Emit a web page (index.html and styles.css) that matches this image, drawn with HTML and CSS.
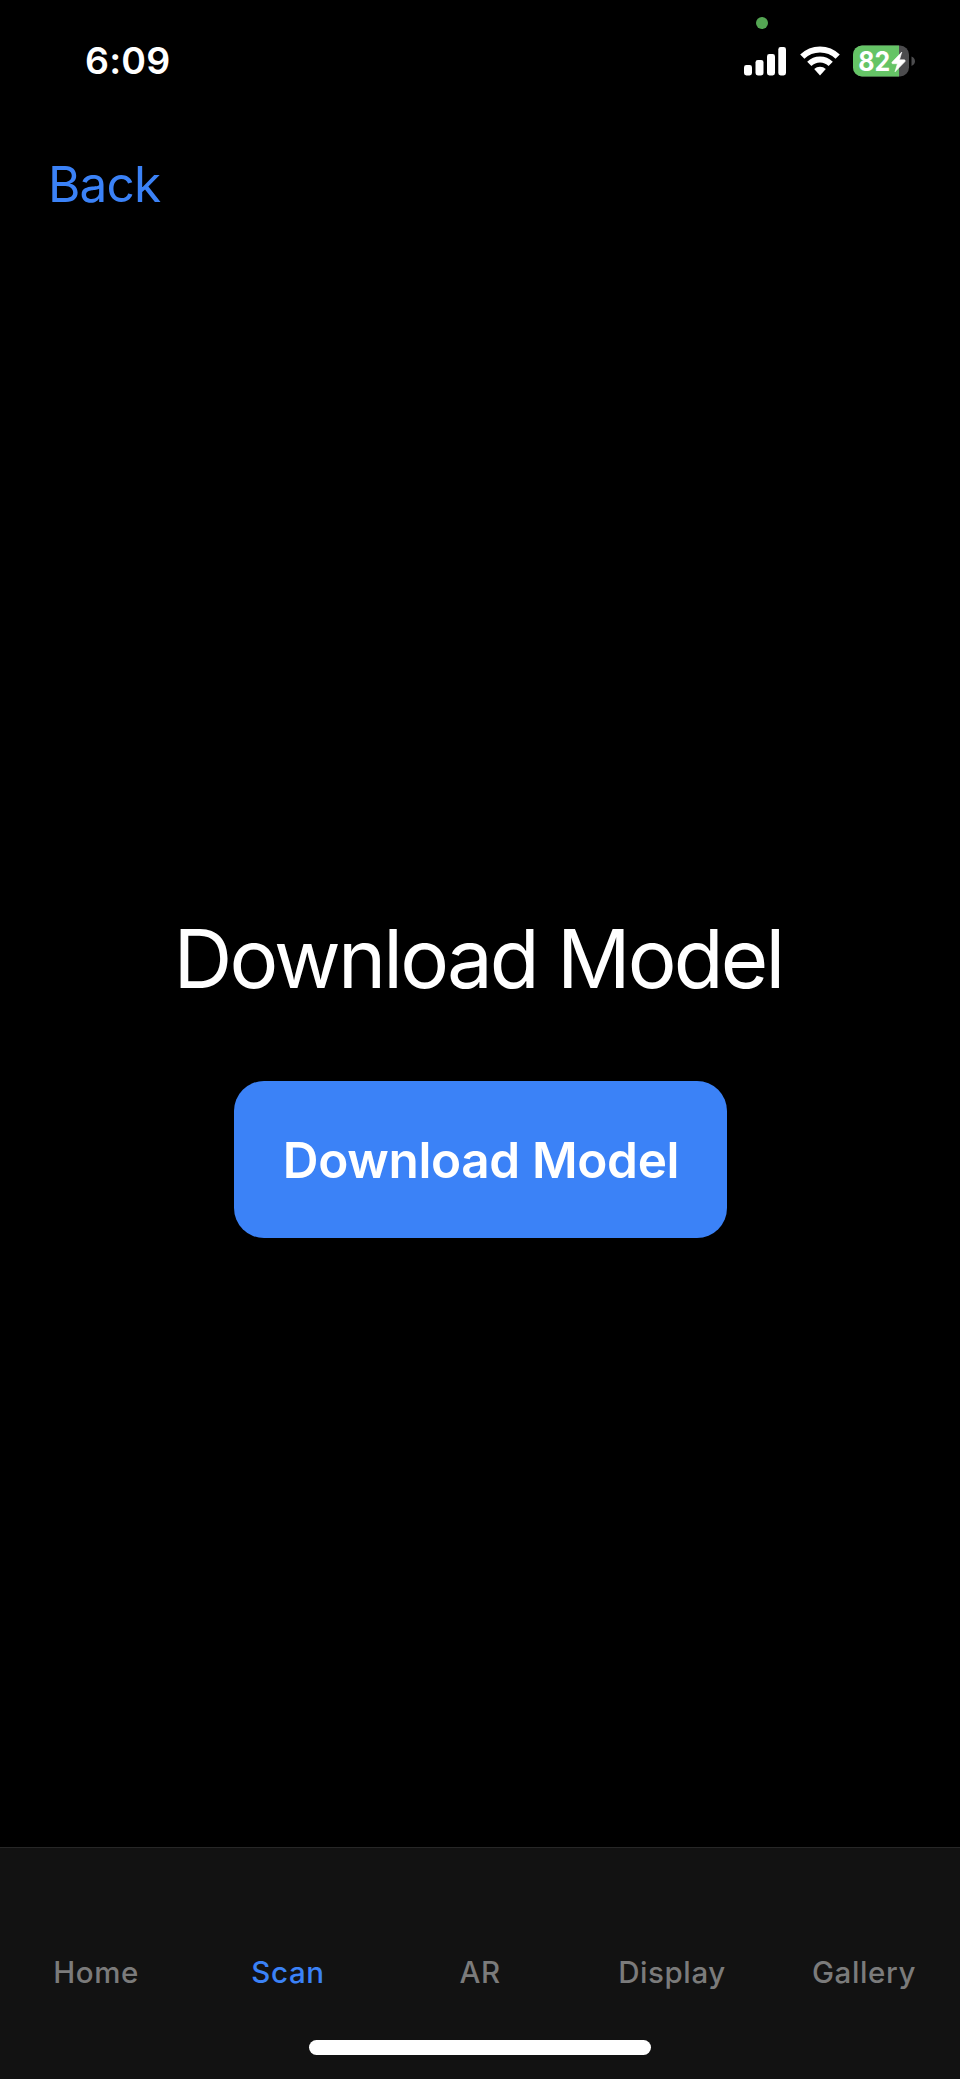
FILE: index.html
```html
<!DOCTYPE html>
<html lang="en">
<head>
<meta charset="utf-8">
<title>Download Model</title>
<link rel="stylesheet" href="styles.css">
</head>
<body>
<div class="screen">
  <header class="status">
    <span class="time">6:09</span>
    <div class="indicators">
      <span class="camera-dot"></span>
      <svg class="signal" width="42" height="30" viewBox="0 0 42 30" fill="#fff">
        <rect x="0" y="19" width="8" height="10.500" rx="2.4"/>
        <rect x="11.5" y="14" width="8" height="15.500" rx="2.4"/>
        <rect x="23" y="8" width="8" height="21.500" rx="2.4"/>
        <rect x="34.3" y="1" width="7.7" height="28.500" rx="2.4"/>
      </svg>
      <svg class="wifi" width="40" height="30" viewBox="0 0 40 30" fill="none" stroke="#fff">
        <path d="M2.3 10.700a25.2 25.2 0 0 1 35.4 0" stroke-width="6"/>
        <path d="M9.3 17.800a15.2 15.2 0 0 1 21.4 0" stroke-width="6"/>
        <path d="M14.2 23.1a8.3 8.3 0 0 1 11.6 0L20 29.5z" fill="#fff" stroke="none"/>
      </svg>
      <svg class="battery" width="63" height="32" viewBox="0 0 63 32">
        <defs><clipPath id="shell"><rect x="0" y="0.5" width="56" height="31" rx="9"/></clipPath></defs>
        <g clip-path="url(#shell)">
          <rect width="56" height="32" fill="#4c4c4e"/>
          <rect width="46" height="32" fill="#65c466"/>
        </g>
        <path d="M58.5 11.5q3.5 1.5 3.5 4.7t-3.5 4.7z" fill="#4c4c4e"/>
        <text class="charge" x="5.2" y="25.8" textLength="32" lengthAdjust="spacingAndGlyphs">82</text>
        <path d="M48.800 7L39 17.200q-.6 1.300.7 1.500h4.700L42 26.800 52 16.600q.7-1.500-.7-1.800h-4.800z" fill="#fff" stroke="#fff" stroke-width=".6" stroke-linejoin="round"/>
      </svg>
    </div>
  </header>
  <nav class="nav"><a class="back">Back</a></nav>
  <main class="content">
    <h1 class="title">Download Model</h1>
    <button class="download">Download Model</button>
  </main>
  <footer class="tabbar">
    <div class="tabs">
      <a class="tab">Home</a>
      <a class="tab active">Scan</a>
      <a class="tab">AR</a>
      <a class="tab">Display</a>
      <a class="tab">Gallery</a>
    </div>
    <div class="home-indicator"></div>
  </footer>
</div>
</body>
</html>
```
FILE: styles.css
```css
* { box-sizing: border-box; }
body { margin: 0; background: #000; font-family: Inter, "Liberation Sans", sans-serif; }
.screen { width: 960px; height: 2079px; display: flex; flex-direction: column; background: #000; color: #fff; }
.status { height: 122px; padding: 0 44px 0 85px; display: flex; align-items: center; justify-content: space-between; }
.time { font-size: 37.500px; font-weight: 600; line-height: 44px; letter-spacing: 0.2px; }
.indicators { position: relative; display: flex; align-items: center; }
.camera-dot { position: absolute; left: 12px; top: -28px; width: 12px; height: 12px; border-radius: 50%; background: #54a653; }
.wifi { margin-left: 14px; }
.battery { margin-left: 13px; }
.charge { font-size: 26.500px; font-weight: 700; fill: #fff; }
.nav { height: 124px; padding: 0 48px; display: flex; align-items: center; }
.back { font-size: 49.500px; line-height: 60px; letter-spacing: -0.8px; color: #3b82f7; }
.content { height: 1601px; padding-top: 662px; display: flex; flex-direction: column; align-items: center; }
.title { margin: 0; padding-right: 4px; font-size: 81.500px; font-weight: 400; line-height: 101px; letter-spacing: -2.850px; white-space: nowrap; }
.download { margin-top: 72px; width: 493px; height: 157px; padding: 0 0 0 2px; border: 0; border-radius: 30px; background: #3b82f7; color: #fff; font-family: inherit; font-size: 49.500px; font-weight: 600; letter-spacing: -0.350px; white-space: nowrap; }
.tabbar { height: 232px; padding-top: 105px; border-top: 1px solid #272727; background: #121212; display: flex; flex-direction: column; align-items: center; }
.tabs { width: 100%; display: grid; grid-template-columns: repeat(5, 1fr); text-align: center; }
.tab { font-size: 29.500px; font-weight: 500; line-height: 38px; letter-spacing: 0.6px; color: #7b7b7b; }
.active { color: #3b82f7; }
.home-indicator { margin-top: 49px; width: 342px; height: 15px; border-radius: 8px; background: #fff; }
```
